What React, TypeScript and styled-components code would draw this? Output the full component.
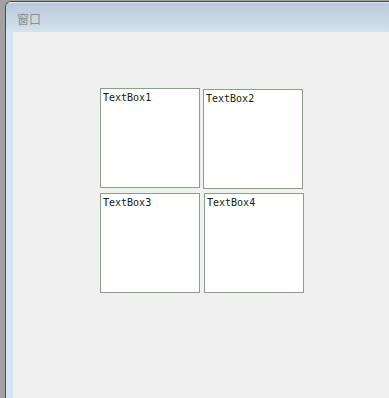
import React from "react";
import styled, { createGlobalStyle } from "styled-components";

const Global = createGlobalStyle`
  html, body { margin: 0; padding: 0; }
  body {
    background: #a2a2a2;
    width: 389px;
    height: 398px;
    overflow: hidden;
    font-family: "Noto Sans CJK SC", "DejaVu Sans", sans-serif;
  }
`;

const Frame = styled.div`
  margin: 1px 0 0 5px;
  height: 397px;
  box-sizing: border-box;
  border-left: 1px solid #4a4a4a;
  border-top: 1px solid #4a4a4a;
  border-top-left-radius: 6px;
  background: #d7e4f2;
  display: flex;
  flex-direction: column;
  overflow: hidden;
`;

const TitleBar = styled.div`
  height: 30px;
  flex: none;
  background: linear-gradient(#b9c9da, #d4e1ee);
  display: flex;
  align-items: center;
  padding-left: 11px;
  box-shadow: inset 0 1px 0 rgba(255,255,255,0.6);
`;

const Title = styled.span`
  font-size: 12px;
  color: #8e8e8e;
  font-family: "Noto Sans CJK SC", sans-serif;
  margin-top: 2px;
`;

const Body = styled.div`
  flex: 1;
  margin-left: 7px;
  background: #f0f0f0;
  padding: 56px 0 0 87px;
`;

const Grid = styled.div`
  display: grid;
  grid-template-columns: 100px 100px;
  grid-auto-rows: 100px;
  column-gap: 3px;
  row-gap: 5px;
`;

const Box = styled.div<{ $dx?: number; $dy?: number }>`
  box-sizing: border-box;
  width: 100px;
  height: 100px;
  background: #ffffff;
  border: 1px solid #8c9f8c;
  margin-left: ${(p) => p.$dx ?? 0}px;
  margin-top: ${(p) => p.$dy ?? 0}px;
  padding: 2px 0 0 2px;
  font-family: "DejaVu Sans Mono", "Liberation Mono", monospace;
  font-size: 10px;
  line-height: 13px;
  color: #13200f;
`;

export default function App() {
  return (
    <>
      <Global />
      <Frame>
        <TitleBar>
          <Title>窗口</Title>
        </TitleBar>
        <Body>
          <Grid>
            <Box>TextBox1</Box>
            <Box $dy={1}>TextBox2</Box>
            <Box>TextBox3</Box>
            <Box $dx={1}>TextBox4</Box>
          </Grid>
        </Body>
      </Frame>
    </>
  );
}
